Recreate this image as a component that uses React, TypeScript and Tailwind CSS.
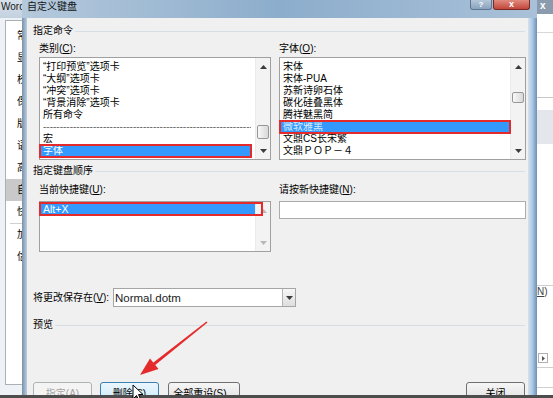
import React from 'react'

const categories = ['“打印预览”选项卡', '“大纲”选项卡', '“冲突”选项卡', '“背景消除”选项卡', '所有命令', '-', '宏', '字体']
const fonts = ['宋体', '宋体-PUA', '苏新诗卵石体', '碳化硅叠黑体', '腾祥魅黑简', '微软雅黑', '文鼎CS长宋繁', '文鼎ＰＯＰ－４']
const options = ['常规', '显示', '校对', '保存', '版式', '语言', '高级', '自定义功能区', '快速访问工具栏', '加载项', '信任中心']

function Arrow({ up, dim }: { up?: boolean; dim?: boolean }) {
  return (
    <svg width="7" height="4" viewBox="0 0 7 4">
      <path d={up ? 'M0 4L3.5 0L7 4Z' : 'M0 0L3.5 4L7 0Z'} fill={dim ? '#b8b8b8' : '#3c3c3c'} />
    </svg>
  )
}

function ScrollBar({ thumb, dim }: { thumb?: string; dim?: boolean }) {
  return (
    <div className="w-[15px] flex flex-col bg-[#f3f3f3] border-l border-[#ebebeb]">
      <div className="h-[17px] flex items-center justify-center">
        <Arrow up dim={dim} />
      </div>
      <div className="flex-1 px-[1px]">
        {thumb && <div className={`${thumb} rounded-[2px] border border-[#979797] bg-linear-to-r from-[#f8f8f8] to-[#d9d9d9]`} />}
      </div>
      <div className="h-[17px] flex items-center justify-center">
        <Arrow dim={dim} />
      </div>
    </div>
  )
}

function Group({ label, className = '' }: { label: string; className?: string }) {
  return (
    <div className={`flex items-center gap-[2px] pr-[3px] ${className}`}>
      <span className="h-[12px] leading-[12px] whitespace-nowrap">{label}</span>
      <div className="flex-1 h-px bg-[#d5dfe5]" />
    </div>
  )
}

function Btn({ children, className = '' }: { children: React.ReactNode; className?: string }) {
  return (
    <div className={`h-[23px] shrink-0 rounded-[3px] border flex items-center justify-center whitespace-nowrap ${className}`}>
      {children}
    </div>
  )
}

function RedBox({ className = '-inset-px' }: { className?: string }) {
  return <span className={`absolute border-2 border-[#e42a2a] ${className}`} />
}

export default function App() {
  return (
    <div className="w-[553px] h-[398px] overflow-hidden relative flex flex-col bg-white text-black text-[10px] leading-[12px] font-['Liberation_Sans','Noto_Sans_CJK_SC',sans-serif]">
      <div className="h-[395px] flex overflow-hidden">
        {/* Word options window behind, left edge */}
        <div className="w-[22px] shrink-0 flex flex-col overflow-hidden bg-[#eef2f6]">
          <div className="h-[18px] shrink-0 bg-linear-to-b from-[#d7e1eb] to-[#c3d1df] pl-[1px] pt-[1px] whitespace-nowrap text-[10px] text-[#1a1a1a]">
            Word 选项
          </div>
          <div className="mt-[2px] ml-[5px] h-[365px] w-[40px] border-l border-t border-b border-[#a9b0b8] bg-white pt-[4px] flex flex-col">
            {options.map((o, i) => (
              <React.Fragment key={o}>
                <div className={`h-[22px] leading-[22px] pl-[11px] whitespace-nowrap ${i === 7 ? 'bg-[#c9c9c9]' : ''}`}>{o}</div>
                {i === 8 && <div className="h-px bg-[#d0d0d0] ml-[4px]" />}
              </React.Fragment>
            ))}
          </div>
        </div>

        {/* dialog */}
        <div className="w-[515px] shrink-0 flex flex-col">
          <div className="h-[18px] shrink-0 flex items-start bg-linear-to-r from-[#b5c9dc] via-[#8cadcc] to-[#a9c1d8]">
            <span className="pl-[5px] pt-[1px] text-[10px] leading-[12px] text-[#141414]">自定义键盘</span>
            <div className="ml-auto mr-[7px] flex gap-[1px]">
              <div className="w-[22px] h-[10px] rounded-b-[3px] border border-t-0 border-[#5e7692] bg-linear-to-b from-[#b5c7d9] to-[#8aa3bd] flex items-center justify-center text-white text-[8px] leading-[8px] font-bold">
                ?
              </div>
              <div className="w-[37px] h-[10px] rounded-b-[3px] border border-t-0 border-[#7a2a22] bg-linear-to-b from-[#e08a7e] to-[#c2443a] flex items-center justify-center text-white text-[9px] leading-[9px] font-bold">
                x
              </div>
            </div>
          </div>

          <div className="flex-1 flex min-h-0">
            <div className="w-[5px] shrink-0 bg-linear-to-r from-[#7a91a9] to-[#b9cde1]" />

            {/* client area */}
            <div className="flex-1 bg-[#f0f0f0] flex flex-col pl-[6px] overflow-hidden">
              <Group label="指定命令" className="mt-[7px]" />

              <div className="mt-[6px] pl-[6px] flex gap-[8px]">
                <div className="w-[232px] shrink-0">
                  <div className="h-[12px]">
                    类别(<span className="underline">C</span>):
                  </div>
                  <div className="mt-[2px] h-[103px] border border-[#a0a0a0] bg-white flex">
                    <div className="w-[211px] pt-[3px] flex flex-col">
                      {categories.map((c) =>
                        c === '-' ? (
                          <div key="dash" className="h-[12px] pl-[3px] overflow-hidden whitespace-nowrap text-[#666]">
                            {'-'.repeat(70)}
                          </div>
                        ) : c === '字体' ? (
                          <div key={c} className="relative h-[12px] pl-[3px] bg-[#3399ff] text-white">
                            {c}
                            <RedBox />
                          </div>
                        ) : (
                          <div key={c} className="h-[12px] pl-[3px] whitespace-nowrap">
                            {c}
                          </div>
                        ),
                      )}
                    </div>
                    <div className="flex-1" />
                    <ScrollBar thumb="mt-[50px] h-[14px]" />
                  </div>
                </div>

                <div className="w-[247px] shrink-0">
                  <div className="h-[12px]">
                    字体(<span className="underline">O</span>):
                  </div>
                  <div className="mt-[2px] h-[103px] border border-[#a0a0a0] bg-white flex">
                    <div className="w-[230px] pt-[3px] flex flex-col">
                      {fonts.map((f) =>
                        f === '微软雅黑' ? (
                          <div key={f} className="relative h-[12px] pl-[3px] bg-[#3399ff] text-[#dbeaff]">
                            {f}
                            <RedBox />
                          </div>
                        ) : (
                          <div key={f} className="h-[12px] pl-[3px] whitespace-nowrap">
                            {f}
                          </div>
                        ),
                      )}
                    </div>
                    <ScrollBar thumb="mt-[17px] h-[11px]" />
                  </div>
                </div>
              </div>

              <Group label="指定键盘顺序" className="mt-[5px]" />

              <div className="mt-[7px] pl-[6px] flex gap-[8px]">
                <div className="w-[232px] shrink-0">
                  <div className="h-[12px]">
                    当前快捷键(<span className="underline">U</span>):
                  </div>
                  <div className="mt-[5px] h-[51px] border border-[#a0a0a0] bg-white flex">
                    <div className="w-[217px] pt-[1px] flex flex-col">
                      <div className="relative h-[12px] pl-[3px] bg-[#3399ff] text-white text-[10.5px]">
                        Alt+X
                        <RedBox className="-left-px -top-px -bottom-px -right-[8px]" />
                      </div>
                    </div>
                    <div className="flex-1" />
                    <ScrollBar dim />
                  </div>
                </div>

                <div className="w-[247px] shrink-0">
                  <div className="h-[12px]">
                    请按新快捷键(<span className="underline">N</span>):
                  </div>
                  <div className="mt-[5px] h-[18px] border border-[#acacac] bg-white" />
                </div>
              </div>

              <div className="mt-[36px] h-[19px] flex items-center">
                <div className="w-[80px] shrink-0 whitespace-nowrap">
                  将更改保存在(<span className="underline">V</span>):
                </div>
                <div className="w-[183px] h-[19px] border border-[#a5a5a5] bg-white flex items-center">
                  <span className="flex-1 pl-[1px] text-[11.5px] leading-[14px] text-[#222]">Normal.dotm</span>
                  <div className="w-[13px] h-full border-l border-[#b5b5b5] bg-linear-to-b from-[#f7f7f7] to-[#dedede] flex items-center justify-center">
                    <Arrow />
                  </div>
                </div>
              </div>

              <Group label="预览" className="mt-[12px]" />

              <div className="mt-[51px] flex pr-[3px]">
                <Btn className="w-[59px] border-[#adb2b5] bg-[#f4f4f4] text-[#a3a3a3]">指定(A)</Btn>
                <Btn className="ml-[8px] w-[59px] border-[#3c7fb1] bg-linear-to-b from-[#eaf6fd] via-[#d9f0fc] to-[#a7d9f5]">
                  删除(<span className="underline">S</span>)
                </Btn>
                <Btn className="ml-[9px] w-[72px] border-[#707070] bg-linear-to-b from-[#f6f6f6] to-[#dddddd]">
                  全部重设(<span className="underline">S</span>)...
                </Btn>
                <Btn className="ml-auto w-[59px] border-[#707070] bg-linear-to-b from-[#f6f6f6] to-[#dddddd]">关闭</Btn>
              </div>
            </div>

            <div className="w-[9px] shrink-0 bg-linear-to-r from-[#d6e2ee] via-[#a9c7e5] to-[#6f90b4]" />
          </div>
        </div>

        {/* Word options window behind, right edge */}
        <div className="flex-1 flex flex-col bg-white overflow-hidden">
          <div className="h-[14px] shrink-0 bg-[#8b9bae] pl-[3px] text-white text-[10px] leading-[12px] font-bold">x</div>
          <div className="mt-[18px] h-px bg-[#d8d8d8]" />
          <div className="mt-[64px] h-px bg-[#c8c8c8]" />
          <div className="mt-[12px] h-[34px] bg-[#e3e7eb]" />
          <div className="mt-[141px] h-px bg-[#cfcfcf]" />
          <div className="mt-[1px] h-[10px] leading-[10px] text-[#444] whitespace-nowrap">
            <span className="underline">N</span>)
          </div>
          <div className="mt-[56px] ml-[1px] w-[10px] h-[10px] border border-[#b0b0b0] flex items-center justify-center">
            <svg width="3" height="5" viewBox="0 0 3 5">
              <path d="M0 0L3 2.5L0 5Z" fill="#555" />
            </svg>
          </div>
          <div className="mt-[4px] h-px bg-[#cfcfcf]" />
          <div className="mt-[19px] h-px bg-[#cfcfcf]" />
        </div>
      </div>
      <div className="h-[3px] bg-[#4d4d4d]" />

      {/* red annotation arrow */}
      <svg className="absolute left-[136px] top-[318px]" width="76" height="62" viewBox="0 0 76 62">
        <path d="M70.5 3.4L71.5 4.6L18.9 47.2L17.1 44.8Z" fill="#e42a2a" />
        <path d="M4 57L22.5 51L14 40.5Z" fill="#e42a2a" />
      </svg>

      {/* mouse pointer */}
      <svg className="absolute left-[132px] top-[384px]" width="12" height="18" viewBox="0 0 12 18">
        <path d="M1 1L1 15L4.5 11.5L7 17L9 16L6.5 10.5L11 10.5Z" fill="#fff" stroke="#000" strokeWidth="1" strokeLinejoin="round" />
      </svg>
    </div>
  )
}
